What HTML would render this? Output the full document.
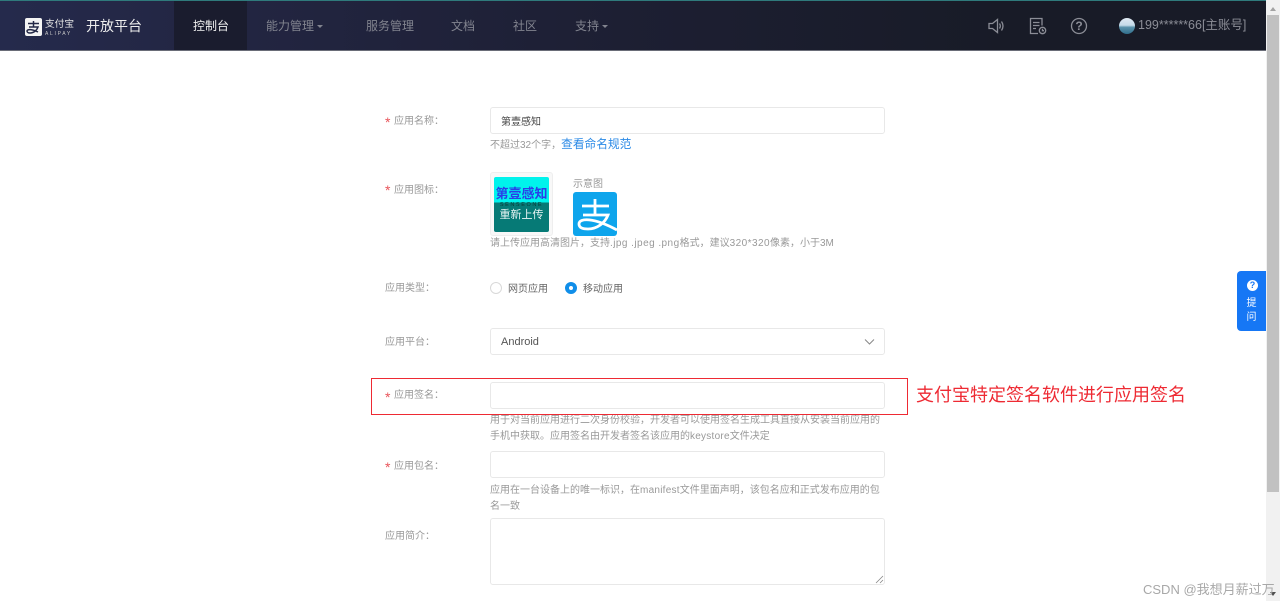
<!DOCTYPE html>
<html lang="zh-CN">
<head>
<meta charset="utf-8">
<title>开放平台</title>
<style>
html,body{margin:0;padding:0;width:1280px;height:601px;overflow:hidden;background:#fff;}
body{font-family:"Liberation Sans","Noto Sans CJK SC",sans-serif;position:relative;color:#999;}
.a{position:absolute;white-space:nowrap;}
.nav{left:0;top:0;width:1266px;height:51px;background:linear-gradient(90deg,#252a4c 0,#222541 250px,#1d1f33 620px,#181b27 1000px);border-top:1px solid #2f7a7c;box-sizing:border-box;border-bottom:1px solid #6a6d78;}
.ni{font-size:12px;color:#82848f;top:18px;line-height:16px;}
.caret{display:inline-block;width:0;height:0;border-left:3.500px solid transparent;border-right:3.500px solid transparent;border-top:3.500px solid #82848f;vertical-align:2px;margin-left:3px;}
.lb{font-size:10px;color:#999;line-height:14px;}
.star{font-size:14px;color:#e8545a;line-height:14px;}
.box{border:1px solid #e8e8e8;border-radius:3px;box-sizing:border-box;background:#fff;left:490px;width:395px;}
.hint{font-size:10px;color:#999;line-height:16px;left:490px;}
</style>
</head>
<body>
<div class="a nav"></div>
<div class="a" style="left:174px;top:1px;width:73px;height:49px;background:#1a1c2e;"></div>

<!-- logo -->
<div class="a" style="left:25px;top:18px;width:17px;height:18px;background:#f4f4f4;border-radius:2px;"></div>
<svg class="a" style="left:25px;top:18px;" width="17" height="18" viewBox="0 0 17 18"><path d="M3 5.500h11M8.500 3v6M4 9h9c-1 3-4 6-8 6-2 0-3-1-3-2 0-2 5-2 11 1" fill="none" stroke="#232847" stroke-width="1.500"/></svg>
<div class="a" style="left:45px;top:19px;font-size:9.700px;line-height:12px;color:#e6e6e6;">支付宝</div>
<div class="a" style="left:45px;top:31px;font-size:5px;line-height:6px;color:#c8c8c8;letter-spacing:1.700px;">ALIPAY</div>
<div class="a" style="left:86px;top:17px;font-size:14px;line-height:18px;color:#eee;">开放平台</div>

<div class="a ni" style="left:193px;color:#f0f0f0;">控制台</div>
<div class="a ni" style="left:266px;">能力管理<span class="caret"></span></div>
<div class="a ni" style="left:366px;">服务管理</div>
<div class="a ni" style="left:451px;">文档</div>
<div class="a ni" style="left:513px;">社区</div>
<div class="a ni" style="left:575px;">支持<span class="caret"></span></div>

<!-- right icons -->
<svg class="a" style="left:988px;top:17px;" width="18" height="18" viewBox="0 0 18 18" fill="none" stroke="#8b8d96" stroke-width="1.300"><path d="M1 6.500h3.500L9.500 2.500v13L4.500 11.500H1z"/><path d="M11.500 6.500c1 1.500 1 3.500 0 5M13.500 4.500c2 3 2 6 0 9"/></svg>
<svg class="a" style="left:1029px;top:17px;" width="18" height="18" viewBox="0 0 18 18" fill="none" stroke="#8b8d96" stroke-width="1.300"><path d="M9 16.500H1.500V1.500h11.500v7M4 5.500h6.500M4 8.500h6.500M4 11.500h3"/><circle cx="13.500" cy="13.500" r="3.200"/><path d="M13.500 11.800v1.900h1.500"/></svg>
<svg class="a" style="left:1070px;top:17px;" width="18" height="18" viewBox="0 0 18 18" fill="none" stroke="#8b8d96" stroke-width="1.300"><circle cx="9" cy="9" r="7.500"/></svg>
<div class="a" style="left:1070px;top:17px;width:18px;text-align:center;font-size:12px;font-weight:bold;line-height:18px;color:#8b8d96;">?</div>
<div class="a" style="left:1118.500px;top:18px;width:16px;height:16px;border-radius:50%;background:linear-gradient(180deg,#dfe9f2 0,#c5dbe9 45%,#5b93ac 58%,#2f6e8c 100%);"></div>
<div class="a" style="left:1138px;top:17px;font-size:12.500px;line-height:16px;color:#8b8d96;">199******66[主账号]</div>

<!-- scrollbar -->
<div class="a" style="left:1266px;top:0;width:14px;height:601px;background:#f1f1f1;"></div>
<div class="a" style="left:1267px;top:15px;width:12px;height:477px;background:#c1c1c1;"></div>
<div class="a" style="left:1270px;top:7px;width:0;height:0;border-left:3px solid transparent;border-right:3px solid transparent;border-bottom:4px solid #a3a3a3;"></div>
<div class="a" style="left:1270px;top:592px;width:0;height:0;border-left:3px solid transparent;border-right:3px solid transparent;border-top:4px solid #505050;"></div>

<!-- form row 1 -->
<div class="a star" style="left:385px;top:115px;">*</div>
<div class="a lb" style="left:394px;top:115px;">应用名称：</div>
<div class="a box" style="top:107px;height:27px;"></div>
<div class="a" style="left:501px;top:116px;font-size:10px;line-height:14px;color:#444;">第壹感知</div>
<div class="a hint" style="top:137px;">不超过32个字，<span style="color:#2b8ae6;font-size:11.700px;">查看命名规范</span></div>

<!-- form row 2 -->
<div class="a star" style="left:385px;top:183px;">*</div>
<div class="a lb" style="left:394px;top:184px;">应用图标：</div>
<div class="a" style="left:490px;top:172px;width:63px;height:64px;border:1px solid #eee;border-radius:3px;box-sizing:border-box;background:#f8f8f8;"></div>
<div class="a" style="left:494px;top:177px;width:55px;height:55px;border-radius:2px;background:linear-gradient(180deg,#00f3ec 0,#00f3ec 46%,#067a76 46%,#067a76 100%);overflow:hidden;"></div>
<div class="a" style="left:494px;top:186px;width:55px;text-align:center;font-size:13px;line-height:16px;color:#2a3ee8;font-weight:bold;">第壹感知</div>
<div class="a" style="left:494px;top:202px;width:55px;text-align:center;font-size:5.500px;line-height:7px;letter-spacing:1.600px;color:#063c3a;">SENSEONE</div>
<div class="a" style="left:494px;top:208px;width:55px;text-align:center;font-size:11px;line-height:14px;color:#e8f4f4;">重新上传</div>
<div class="a" style="left:573px;top:178px;font-size:10px;line-height:14px;color:#999;">示意图</div>
<div class="a" style="left:573px;top:192px;width:44px;height:44px;border-radius:3px;background:#0ea5ec;"></div>
<svg class="a" style="left:573px;top:192px;" width="44" height="44" viewBox="0 0 44 44" fill="none" stroke="#fff" stroke-width="2.800"><path d="M9 14h27M22 7v16M10 23h25c-3 8-11 14-20 14-5 0-9-1-9-5 0-6 14-7 38 6"/></svg>
<div class="a hint" style="top:236px;">请上传应用高清图片，支持<span style="letter-spacing:.45px;">.jpg .jpeg .png</span>格式，建议<span style="letter-spacing:.45px;">320*320</span>像素，小于3M</div>

<!-- form row 3 -->
<div class="a lb" style="left:385px;top:282px;">应用类型：</div>
<div class="a" style="left:490px;top:282px;width:12px;height:12px;border:1px solid #d9d9d9;border-radius:50%;box-sizing:border-box;"></div>
<div class="a" style="left:508px;top:283px;font-size:10px;line-height:14px;color:#666;">网页应用</div>
<div class="a" style="left:565px;top:282px;width:12px;height:12px;border:4px solid #108ee9;border-radius:50%;box-sizing:border-box;background:#fff;"></div>
<div class="a" style="left:583px;top:283px;font-size:10px;line-height:14px;color:#666;">移动应用</div>

<!-- form row 4 -->
<div class="a lb" style="left:385px;top:336px;">应用平台：</div>
<div class="a box" style="top:328px;height:27px;"></div>
<div class="a" style="left:501px;top:335px;font-size:11px;line-height:14px;color:#555;">Android</div>
<svg class="a" style="left:864px;top:338px;" width="11" height="8" viewBox="0 0 11 8" fill="none" stroke="#888" stroke-width="1"><path d="M1 1.500l4.500 4.500 4.500-4.500"/></svg>

<!-- form row 5 -->
<div class="a star" style="left:385px;top:390px;">*</div>
<div class="a lb" style="left:394px;top:389px;">应用签名：</div>
<div class="a box" style="top:382px;height:27px;"></div>
<div class="a hint" style="top:413px;">用于对当前应用进行二次身份校验，开发者可以使用签名生成工具直接从安装当前应用的</div>
<div class="a hint" style="top:429px;">手机中获取。应用签名由开发者签名该应用的<span style="letter-spacing:.25px;">keystore</span>文件决定</div>
<div class="a" style="left:371px;top:378px;width:537px;height:37px;border:1px solid #ee2a33;box-sizing:border-box;"></div>
<div class="a" style="left:916px;top:384px;font-size:18px;line-height:22px;color:#ee2a33;">支付宝特定签名软件进行应用签名</div>

<!-- form row 6 -->
<div class="a star" style="left:385px;top:460px;">*</div>
<div class="a lb" style="left:394px;top:460px;">应用包名：</div>
<div class="a box" style="top:451px;height:27px;"></div>
<div class="a hint" style="top:483px;">应用在一台设备上的唯一标识，在<span style="letter-spacing:.25px;">manifest</span>文件里面声明，该包名应和正式发布应用的包</div>
<div class="a hint" style="top:499px;">名一致</div>

<!-- form row 7 -->
<div class="a lb" style="left:385px;top:530px;">应用简介：</div>
<div class="a box" style="top:518px;height:67px;"></div>
<svg class="a" style="left:875px;top:575px;" width="9" height="9" viewBox="0 0 9 9" stroke="#888" stroke-width="0.800"><path d="M1 8L8 1M5 8l3-3"/></svg>

<!-- ask -->
<div class="a" style="left:1237px;top:271px;width:29px;height:60px;background:#1677f5;border-radius:4px 0 0 4px;"></div>
<div class="a" style="left:1247px;top:280px;width:11px;height:11px;border-radius:50%;background:#fff;color:#1677f5;font-size:9px;line-height:11px;text-align:center;font-weight:bold;">?</div>
<div class="a" style="left:1237px;top:297px;width:29px;text-align:center;font-size:10px;line-height:14px;color:#fff;">提</div>
<div class="a" style="left:1237px;top:311px;width:29px;text-align:center;font-size:10px;line-height:14px;color:#fff;">问</div>

<!-- watermark -->
<div class="a" style="left:1143px;top:581px;font-size:13px;line-height:18px;color:#a8a8a8;">CSDN @我想月薪过万</div>
</body>
</html>
